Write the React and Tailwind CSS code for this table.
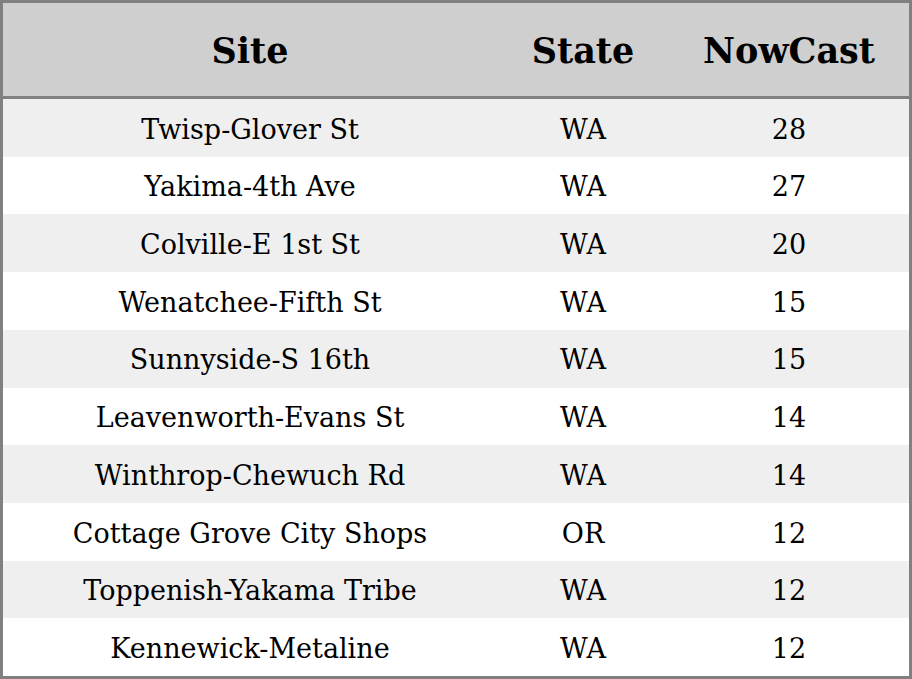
export default function App() {
  const rows = [
    ["Twisp-Glover St", "WA", "28"],
    ["Yakima-4th Ave", "WA", "27"],
    ["Colville-E 1st St", "WA", "20"],
    ["Wenatchee-Fifth St", "WA", "15"],
    ["Sunnyside-S 16th", "WA", "15"],
    ["Leavenworth-Evans St", "WA", "14"],
    ["Winthrop-Chewuch Rd", "WA", "14"],
    ["Cottage Grove City Shops", "OR", "12"],
    ["Toppenish-Yakama Tribe", "WA", "12"],
    ["Kennewick-Metaline", "WA", "12"],
  ];
  return (
    <div className="w-[912px] h-[679px] border-[3px] border-[#808080] flex flex-col bg-white text-black" style={{ fontFamily: '"DejaVu Serif", serif' }}>
      <div className="h-[96px] shrink-0 flex items-center pt-[4px] bg-[#cfcfcf] border-b-[3px] border-[#808080] font-bold text-[35px]">
        <div className="w-[494px] text-center">Site</div>
        <div className="w-[172px] text-center">State</div>
        <div className="flex-1 text-center">NowCast</div>
      </div>
      {rows.map((r, i) => (
        <div key={i} className={`flex-1 flex items-center pt-[4px] text-[27px] ${i % 2 === 0 ? "bg-[#efefef]" : "bg-white"}`}>
          <div className="w-[494px] text-center">{r[0]}</div>
          <div className="w-[172px] text-center">{r[1]}</div>
          <div className="flex-1 text-center">{r[2]}</div>
        </div>
      ))}
    </div>
  );
}
